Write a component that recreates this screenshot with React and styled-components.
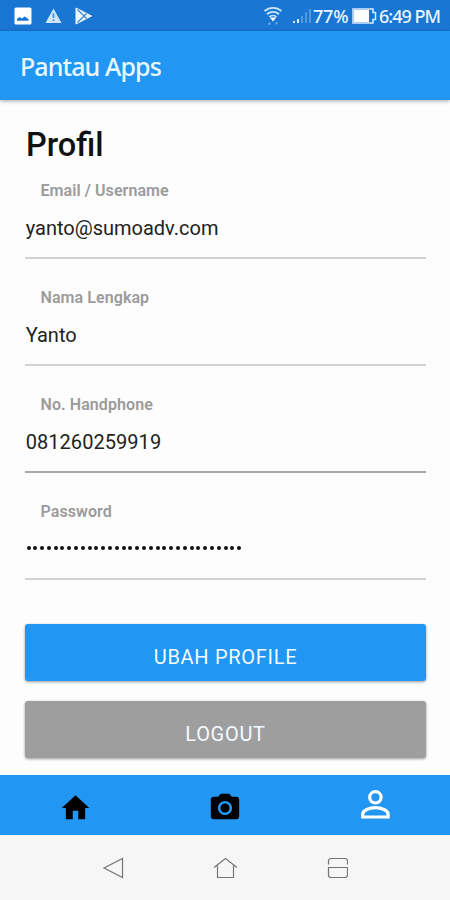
import React from 'react';
import styled, { createGlobalStyle } from 'styled-components';

const fields = [
  { label: 'Email / Username', value: 'yanto@sumoadv.com', spacing: 0 },
  { label: 'Nama Lengkap', value: 'Yanto', spacing: 0 },
  { label: 'No. Handphone', value: '081260259919', spacing: 0.05, line: '#a8a8a8' },
  { label: 'Password', value: 32, password: true },
];

const App = () => {
  return (
    <Screen>
      <GlobalStyle />
      <StatusBar>
        <StatusIcons>
          <PictureIcon />
          <WarningIcon />
          <PlayIcon />
        </StatusIcons>
        <StatusInfo>
          <WifiIcon />
          <SignalIcon />
          <StatusText $width={37}>77%</StatusText>
          <BatteryIcon />
          <StatusText>6:49 PM</StatusText>
        </StatusInfo>
      </StatusBar>
      <Header>
        <HeaderTitle>Pantau Apps</HeaderTitle>
      </Header>
      <Content>
        <Title>Profil</Title>
        {fields.map((field) => (
          <Field key={field.label} $line={field.line}>
            <Label>{field.label}</Label>
            {field.password ? (
              <Dots>
                {Array.from({ length: field.value }, (_, i) => <Dot key={i} />)}
              </Dots>
            ) : (
              <Value $spacing={field.spacing}>{field.value}</Value>
            )}
          </Field>
        ))}
        <Buttons>
          <Button $color="#2196f3">UBAH PROFILE</Button>
          <Button $color="#9e9e9e">LOGOUT</Button>
        </Buttons>
      </Content>
      <TabBar>
        <Tab $top={5}><HomeIcon /></Tab>
        <Tab $top={5}><CameraIcon /></Tab>
        <Tab><PersonIcon /></Tab>
      </TabBar>
      <SystemNav>
        <NavIcons />
      </SystemNav>
    </Screen>
  );
};

const PictureIcon = () => (
  <svg width="18" height="18" viewBox="0 0 18 18">
    <rect x="0.5" y="0.5" width="17" height="17" rx="1.5" fill="#fff" />
    <path d="M3 13.8v-2l2.500-1.800 2.500 1.500 2.500-2 4 2.500v1.800z" fill="#1976d2" />
  </svg>
);

const WarningIcon = () => (
  <svg width="17" height="18" viewBox="0 0 17 18">
    <path d="M8.5 1.500L16.500 16H.500z" fill="#cfe5fa" />
    <path d="M8.5 6.500v4.500M8.500 12.500v1.500" stroke="#4a8fd6" strokeWidth="1.8" />
  </svg>
);

const PlayIcon = () => (
  <svg width="18" height="18" viewBox="0 0 18 18">
    <path d="M1 1L16.5 9 1 17z" fill="#eaf5ff" stroke="#eaf5ff" strokeLinejoin="round" />
    <path d="M2.500 2.500l9 9M2.500 15.500l9-9" stroke="#3a86d6" strokeWidth="1.2" />
  </svg>
);

const WifiIcon = () => (
  <svg width="20" height="20" viewBox="0 0 20 20" fill="none" stroke="#c9e6fb" strokeWidth="1.8">
    <path d="M1.500 5c5-4.200 12-4.200 17 0M4 8.200c3.500-3 8.500-3 12 0M6.500 11c2-1.800 5-1.800 7 0" />
    <path d="M6.800 11.500h6.400L10 15.500z" fill="#fff" stroke="none" />
    <path d="M5 18.500h3l-1.500-2.500zM12 16.500h3L13.500 19z" fill="#7fb9ee" stroke="none" />
  </svg>
);

const SignalIcon = () => (
  <svg width="19" height="16" viewBox="0 0 19 16">
    <path d="M1 13h2v2H1zM5 11h2v4H5z" fill="#d8edfd" />
    <path d="M9 8h2v7H9zM13 4.500h2V15h-2zM17 1h2v14h-2z" fill="#5299e0" />
  </svg>
);

const BatteryIcon = () => (
  <svg width="25" height="16" viewBox="0 0 25 16">
    <path d="M1 1h20v3.500h2.500v7H21V15H1z" fill="none" stroke="#d8edfd" strokeWidth="1.500" />
    <path d="M2 2h15v12H2z" fill="#fff" />
  </svg>
);

const HomeIcon = () => (
  <svg width="33" height="34" viewBox="0 0 24 24" preserveAspectRatio="none">
    <path d="M10 20v-6h4v6h5v-8h3L12 3 2 12h3v8z" />
  </svg>
);

const CameraIcon = () => (
  <svg width="34" height="34" viewBox="0 0 24 24">
    <circle cx="12" cy="12" r="3.200" />
    <path d="M9 2L7.170 4H4c-1.100 0-2 .9-2 2v12c0 1.100.9 2 2 2h16c1.100 0 2-.9 2-2V6c0-1.100-.9-2-2-2h-3.170L15 2H9zm3 15c-2.760 0-5-2.240-5-5s2.240-5 5-5 5 2.240 5 5-2.240 5-5 5z" />
  </svg>
);

const PersonIcon = () => (
  <svg width="30" height="30" viewBox="0 0 30 30" fill="none" stroke="#fff" strokeWidth="3.200">
    <circle cx="15.400" cy="7.300" r="5.700" />
    <path d="M2.700 27v-2.800c0-3.900 6.700-6.500 12.700-6.500s12.700 2.600 12.700 6.500V27z" />
  </svg>
);

const NavIcons = () => (
  <svg width="246" height="22" viewBox="0 0 246 22" fill="none" stroke="#757575" strokeWidth="1.200">
    <path d="M20.500 1.500v19L2 11z" />
    <path d="M112 10.500L123.500 1.500 135 10.500M115.500 8.500v12h16v-12" />
    <path d="M226.500 7.500V4a2.500 2.500 0 0 1 2.500-2.500h14a2.500 2.500 0 0 1 2.500 2.500v3.500M226.500 10.500h19V18a2.500 2.500 0 0 1-2.500 2.500h-14a2.500 2.500 0 0 1-2.500-2.500z" />
  </svg>
);

const GlobalStyle = createGlobalStyle`
  * {
    box-sizing: border-box;
  }

  body {
    margin: 0;
    font-family: Roboto, sans-serif;
  }
`;

const Screen = styled.div`
  display: flex;
  flex-direction: column;
  width: 450px;
  height: 900px;
  background: #fdfdfd;
  overflow: hidden;
`;

const StatusBar = styled.div`
  display: flex;
  align-items: center;
  justify-content: space-between;
  height: 31px;
  padding: 0 10px 0 14px;
  background: #1976d2;
`;

const StatusIcons = styled.div`
  display: flex;
  gap: 13px;
`;

const StatusInfo = styled.div`
  display: flex;
  align-items: center;
  gap: 2px;

  svg:first-child {
    margin-right: 7px;
  }
`;

const StatusText = styled.span`
  width: ${(props) => props.$width || 61}px;
  font-family: 'Noto Sans', sans-serif;
  font-size: 18px;
  font-weight: 500;
  line-height: 24px;
  letter-spacing: ${(props) => (props.$width ? -0.2 : -1)}px;
  white-space: nowrap;
  color: #e8f5ff;
`;

const Header = styled.header`
  display: flex;
  align-items: center;
  height: 69px;
  padding: 0 20px;
  background: #2196f3;
  box-shadow: 0 1px 4px rgba(0, 0, 0, 0.35);
`;

const HeaderTitle = styled.div`
  font-family: 'Noto Sans', sans-serif;
  font-size: 25px;
  font-weight: 500;
  letter-spacing: -0.9px;
  color: #eaf7ff;
`;

const Content = styled.main`
  height: 675px;
  padding: 25px 24px 0 25px;
`;

const Title = styled.h1`
  height: 40px;
  margin: 0 0 13px;
  padding-left: 1px;
  font-size: 32.5px;
  line-height: 40px;
  font-weight: 500;
  color: #111;
`;

const Field = styled.div`
  height: 81px;
  margin-bottom: 26px;
  border-bottom: 2px solid ${(props) => props.$line || '#d2d2d2'};
`;

const Label = styled.div`
  height: 26px;
  padding-left: 15.5px;
  font-size: 16px;
  line-height: 26px;
  font-weight: 600;
  letter-spacing: 0.08px;
  color: #9b9b9b;
`;

const Value = styled.div`
  padding: 11px 0 0 0.7px;
  font-size: 20px;
  line-height: 26px;
  letter-spacing: ${(props) => props.$spacing}px;
  color: #222;
`;

const Dots = styled.div`
  display: flex;
  gap: 2.8px;
  padding: 21px 0 0 1.5px;
`;

const Dot = styled.span`
  width: 4px;
  height: 4px;
  border-radius: 50%;
  background: #111;
`;

const Buttons = styled.div`
  display: flex;
  flex-direction: column;
  gap: 20px;
  padding-top: 18px;
`;

const Button = styled.button`
  height: 57px;
  padding: 8px 0 0;
  border: 0;
  border-radius: 3px;
  font-family: Roboto, sans-serif;
  font-size: 20px;
  letter-spacing: 0.7px;
  color: #f4faff;
  background: ${(props) => props.$color};
  box-shadow: 0 1px 3px rgba(0, 0, 0, 0.4);
`;

const TabBar = styled.nav`
  display: flex;
  height: 60px;
  background: #2196f3;
`;

const Tab = styled.div`
  display: flex;
  align-items: center;
  justify-content: center;
  flex: 1;
  padding-top: ${(props) => props.$top || 0}px;
`;

const SystemNav = styled.div`
  display: flex;
  align-items: center;
  justify-content: center;
  height: 65px;
  background: #f6f6f6;
`;

export default App;
